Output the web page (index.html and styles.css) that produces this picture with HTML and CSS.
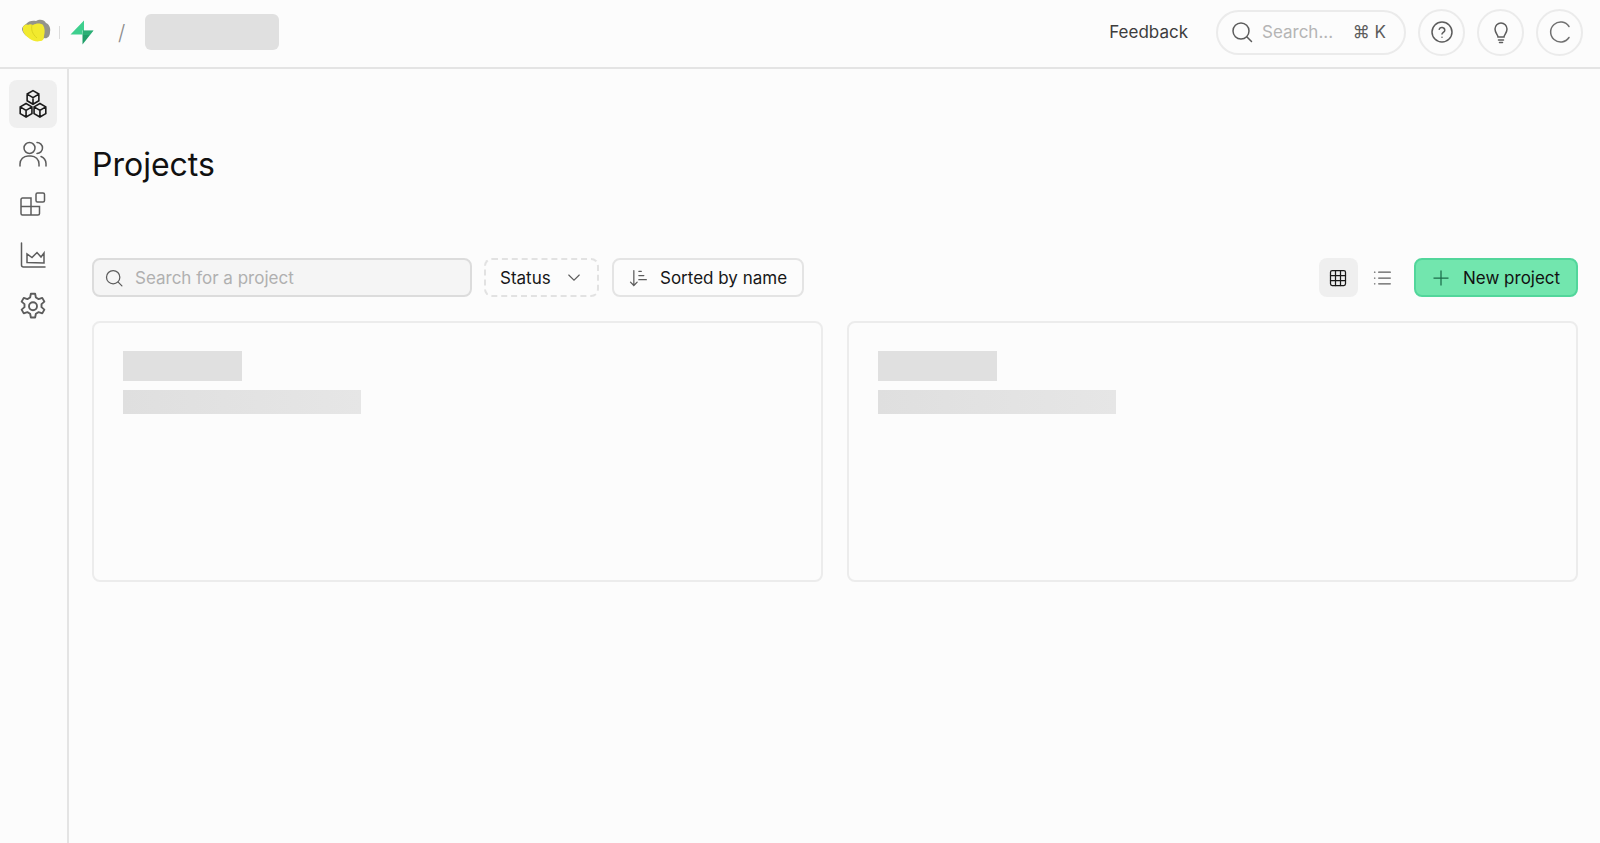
FILE: index.html
```html
<!DOCTYPE html>
<html lang="en">
<head>
<meta charset="utf-8">
<title>Projects</title>
<link rel="stylesheet" href="styles.css">
</head>
<body>
<header class="topbar">
  <div class="crumbs">
    <svg class="logo-user" viewBox="0 0 30 28" width="30" height="28"><path d="M5 6c2-3 7-4 10-3 3-2 8-2 10 2 3 1 5 5 4 9 0 5-3 7-6 6-3 3-8 4-11 1C7 20 1 15 1 11c0-2 2-4 4-5z" fill="#94948a"/><path d="M2 9c1-2 3-3 5-2 1-1 3-1 5 0 3-2 8-2 10 0 2 3 2 7 1 11 0 3-1 5-4 5-3 1-7 0-10-2-3-2-6-5-7-8 0-2 0-3 0-4z" fill="#f2ea2e"/><path d="M11 7c-1 4 0 9 5 13" fill="none" stroke="#dcd420" stroke-width="1"/></svg>
    <span class="crumb-sep"></span>
    <svg class="logo-brand" viewBox="0 0 24 25" width="24" height="25"><path d="M14 .5v10h9.500L12.500 24.500v-10z" fill="#1f9e68"/><path d="M14 .5L.5 14.500H12.500V10.500H14z" fill="#3ecf8e"/><path d="M13 10.500h10.500L20 15H12.500z" fill="#3ecf8e" opacity=".35"/></svg>
    <span class="slash">/</span>
    <div class="crumb-skeleton"></div>
  </div>
  <div class="top-actions">
    <span class="feedback">Feedback</span>
    <div class="top-search">
      <svg class="ic" viewBox="0 0 24 24" width="24" height="24"><circle cx="11" cy="11" r="8"/><path d="M17 17l4.500 4.500"/></svg>
      <span class="top-search-text">Search...</span>
      <span class="kbd">⌘ K</span>
    </div>
    <button class="round"><svg class="ic" viewBox="0 0 24 24" width="24" height="24"><circle cx="12" cy="12" r="10"/><path d="M9.200 9.300a2.900 2.900 0 0 1 5.600.9c0 1.900-2.800 2.400-2.800 3.900"/><path d="M12 17.300h.01"/></svg></button>
    <button class="round"><svg class="ic" viewBox="0 0 24 24" width="24" height="24"><path d="M9 17c0-2-3-4-3-8a6 6 0 0 1 12 0c0 4-3 6-3 8z"/><path d="M9.500 20h5M10.500 22.500h3"/></svg></button>
    <button class="round"><svg class="ic ic-spin" viewBox="0 0 24 24" width="24" height="24"><path d="M21 6.500A10 10 0 1 0 21 17.500"/></svg></button>
  </div>
</header>
<div class="shell">
  <nav class="rail">
    <a class="rail-item is-active"><svg class="ic ic-dark" viewBox="0 0 30 30" width="32" height="32"><path d="M15 2.500l5.500 3.200v6.300L15 15.200 9.500 12V5.700zM9.500 5.700L15 9l5.500-3.300M15 9v6.200"/><path d="M8.500 14.500l5.500 3.200V24l-5.500 3.200L3 24v-6.300zM3 17.700l5.500 3.300 5.500-3.300M8.500 21v6.200"/><path d="M21.500 14.500l5.500 3.200V24l-5.500 3.200L16 24v-6.300zM16 17.700l5.500 3.300 5.500-3.300M21.500 21v6.200"/></svg></a>
    <a class="rail-item"><svg class="ic" viewBox="0 0 30 30" width="30" height="30"><circle cx="11.500" cy="9" r="5.500"/><path d="M2 27v-2a8 8 0 0 1 8-8h3a8 8 0 0 1 8 8v2"/><path d="M19 3.500a5.500 5.500 0 0 1 0 11"/><path d="M23 17.500a8 8 0 0 1 5 7V27"/></svg></a>
    <a class="rail-item"><svg class="ic" viewBox="0 2 30 30" width="30" height="30"><path d="M4.500 10H13v17H4.500a1.500 1.500 0 0 1-1.500-1.500v-14A1.500 1.500 0 0 1 4.500 10zM13 18.500H21.500V25.500a1.500 1.500 0 0 1-1.500 1.500H13M3 18.500H13"/><rect x="18" y="5" width="8.500" height="9" rx="1.500"/></svg></a>
    <a class="rail-item"><svg class="ic" viewBox="0 0 30 30" width="30" height="30"><path d="M3.500 3v22a2 2 0 0 0 2 2H27"/><path d="M9 22.500V14l5 3.500 5-5 4 4.500 3-4v10z"/></svg></a>
    <a class="rail-item"><svg class="ic" viewBox="0 -1 24 24" width="30" height="30"><path d="M10.300 2h3.400l.6 3 2.200 1.300 2.900-1 1.700 3-2.300 2v2.400l2.300 2-1.700 3-2.900-1-2.200 1.300-.6 3h-3.400l-.6-3-2.200-1.300-2.900 1-1.700-3 2.300-2v-2.400l-2.300-2 1.700-3 2.900 1L9.700 5z" stroke-linejoin="round"/><circle cx="12" cy="12" r="3.200"/></svg></a>
  </nav>
  <main class="content">
    <h1 class="title">Projects</h1>
    <div class="toolbar">
      <div class="filters">
        <div class="project-search">
          <svg class="ic" viewBox="0 0 24 24" width="20" height="20"><circle cx="11" cy="11" r="8"/><path d="M17 17l4.500 4.500"/></svg>
          <span class="placeholder">Search for a project</span>
        </div>
        <button class="btn btn-dashed">Status<svg class="ic" viewBox="0 0 24 24" width="18" height="18"><path d="M5 8l7 7 7-7"/></svg></button>
        <button class="btn btn-sort"><svg class="ic" viewBox="0 0 24 24" width="20" height="20"><path d="M7 3v18M3 17l4 4 4-4M13 4h3M13 9h6M13 14h9"/></svg>Sorted by name</button>
      </div>
      <div class="view-actions">
        <button class="view is-active"><svg class="ic ic-dark" viewBox="0 0 24 24" width="20" height="20"><rect x="3" y="3" width="18" height="18" rx="2"/><path d="M3 9h18M3 15h18M9 3v18M15 3v18"/></svg></button>
        <button class="view"><svg class="ic" viewBox="0 0 24 24" width="20" height="20"><path d="M8 5h14M8 12h14M8 19h14M3 5h.5M3 12h.5M3 19h.5"/></svg></button>
        <button class="btn-primary"><svg class="ic-plus" viewBox="0 0 24 24" width="20" height="20"><path d="M12 3v18M3 12h18"/></svg>New project</button>
      </div>
    </div>
    <div class="cards">
      <article class="card"><div class="sk sk-title"></div><div class="sk sk-line"></div></article>
      <article class="card"><div class="sk sk-title"></div><div class="sk sk-line"></div></article>
    </div>
  </main>
</div>
</body>
</html>
```
FILE: styles.css
```css
* { box-sizing: border-box; }
html, body { margin: 0; height: 100%; }
body {
  background: #fcfcfc;
  color: #171717;
  font-family: "Inter", "Liberation Sans", sans-serif;
  overflow: hidden;
}
button { font: inherit; color: inherit; background: none; padding: 0; cursor: pointer; }
svg { display: block; flex: none; }
.ic { fill: none; stroke: #5c5c5c; stroke-width: 1.5; stroke-linecap: round; }
.ic-dark { stroke: #1a1a1a; }

.topbar {
  height: 69px;
  border-bottom: 2px solid #e4e4e4;
  display: flex;
  align-items: center;
  justify-content: space-between;
  padding: 0 17px 3px 21px;
}
.crumbs { display: flex; align-items: center; }
.crumb-sep { width: 1px; height: 13px; background: #dcdcdc; margin: 0 10px 0 8px; }
.slash { margin: 0 20px 0 24px; font-size: 21px; font-weight: 300; color: #8c8c8c; line-height: 1; }
.crumb-skeleton { width: 134px; height: 36px; border-radius: 6px; background: #e0e0e0; }

.top-actions { display: flex; align-items: center; }
.feedback { font-size: 17px; color: #3d3d3d; margin-right: 28px; }
.top-search {
  width: 190px;
  height: 45px;
  border: 2px solid #ebebeb;
  border-radius: 23px;
  display: flex;
  align-items: center;
  padding: 0 18px 0 12px;
}
.top-search-text { margin-left: 8px; font-size: 17px; color: #b5b5b5; }
.kbd { margin-left: auto; font-size: 17px; color: #5c5c5c; }
.round {
  width: 47px;
  height: 47px;
  border: 2px solid #ebebeb;
  border-radius: 50%;
  margin-left: 12px;
  display: flex;
  align-items: center;
  justify-content: center;
}
.ic-spin { stroke: #707070; }

.shell { display: flex; height: calc(100% - 69px); }
.rail {
  width: 69px;
  border-right: 2px solid #e4e4e4;
  padding: 11px 9px 0;
  display: flex;
  flex-direction: column;
  gap: 2.300px;
  flex: none;
}
.rail-item {
  width: 48px;
  height: 48px;
  border-radius: 8px;
  display: flex;
  align-items: center;
  justify-content: center;
}
.rail-item.is-active { background: #efefef; }

.content { flex: 1; padding: 0 22px 0 23px; }
.title {
  margin: 0;
  padding-top: 76px;
  height: 189px;
  font-size: 32px;
  line-height: 40px;
  font-weight: 400;
  color: #111;
}
.toolbar { display: flex; justify-content: space-between; align-items: center; height: 39px; }
.filters, .view-actions { display: flex; align-items: center; }
.project-search {
  width: 380px;
  height: 39px;
  background: #f5f5f5;
  border: 2px solid #dcdcdc;
  border-radius: 8px;
  display: flex;
  align-items: center;
  padding: 0 10px;
  gap: 11px;
}
.placeholder { font-size: 17px; color: #b0b0b0; }
.btn {
  height: 39px;
  border-radius: 8px;
  display: flex;
  align-items: center;
  font-size: 17px;
  color: #171717;
}
.btn-dashed {
  width: 115px;
  margin-left: 12px;
  border: 2px dashed #e2e2e2;
  padding: 0 0 0 14px;
  justify-content: flex-start;
  gap: 14px;
}
.btn-sort {
  width: 192px;
  margin-left: 13px;
  border: 2px solid #e4e4e4;
  padding: 0 14px;
  gap: 12px;
  white-space: nowrap;
}
.view {
  width: 39px;
  height: 39px;
  border: 0;
  border-radius: 8px;
  display: flex;
  align-items: center;
  justify-content: center;
}
.view svg { margin-left: -2px; }
.view.is-active { background: #efefef; }
.view + .view { margin-left: 5px; }
.btn-primary {
  width: 164px;
  height: 39px;
  margin-left: 12px;
  background: #72e6ae;
  border: 2px solid #52d69b;
  border-radius: 8px;
  display: flex;
  align-items: center;
  padding: 0 14px 0 15px;
  gap: 12px;
  font-size: 17px;
  color: #111;
  white-space: nowrap;
}
.ic-plus { fill: none; stroke: #1c6b4a; stroke-width: 1.500; }

.cards { display: grid; grid-template-columns: 1fr 1fr; gap: 24px; margin-top: 24px; }
.card {
  height: 261px;
  border: 2px solid #ececec;
  border-radius: 8px;
  padding: 28px 29px;
}
.sk-title { width: 119px; height: 30px; background: #e0e0e0; }
.sk-line { width: 238px; height: 24px; margin-top: 9px; background: linear-gradient(90deg, #dfdfdf, #e6e6e6); }
```
